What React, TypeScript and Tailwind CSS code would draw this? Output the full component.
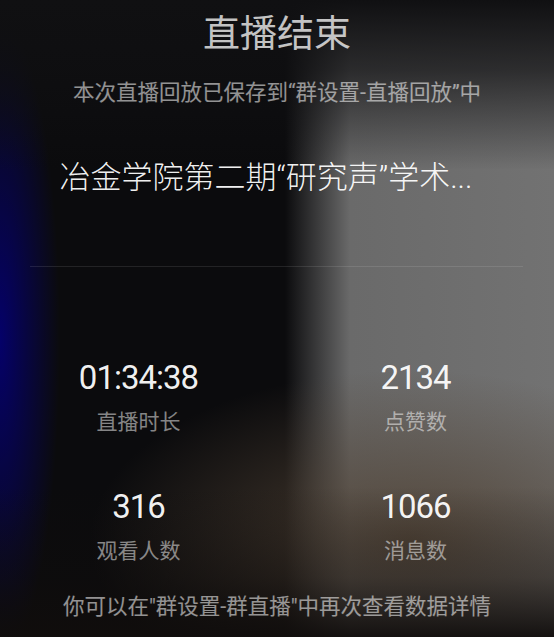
const stats = [
  { value: "01:34:38", label: "直播时长" },
  { value: "2134", label: "点赞数" },
  { value: "316", label: "观看人数" },
  { value: "1066", label: "消息数" },
];

export default function App() {
  return (
    <div
      className="flex h-[637px] w-full flex-col items-center overflow-hidden bg-[#0b0b0d] bg-[image:linear-gradient(to_bottom,rgba(16,16,18,1)_0px,rgba(16,16,18,0.7)_70px,rgba(16,16,18,0)_170px),linear-gradient(to_top,rgba(16,13,12,0.95)_0px,rgba(16,13,12,0.4)_60px,rgba(16,13,12,0)_150px),radial-gradient(ellipse_60px_320px_at_0px_340px,rgba(4,0,110,0.95),rgba(4,0,110,0)_100%),radial-gradient(ellipse_320px_170px_at_410px_540px,rgba(80,66,52,0.9),rgba(80,66,52,0)_100%),linear-gradient(to_right,rgba(108,108,108,0)_285px,#6a6a6a_350px,#727272_100%)] font-['Roboto','Noto_Sans_CJK_SC',sans-serif]"
    >
      <h1 className="mt-[16px] text-[37px] leading-[37px] font-normal text-white/75">
        直播结束
      </h1>
      <p className="mt-[29px] text-[21.5px] leading-[22px] text-white/55">
        本次直播回放已保存到“群设置-直播回放”中
      </p>
      <p className="mt-[58px] mr-[22px] text-[31px] leading-[31px] font-light text-white/95">
        冶金学院第二期“研究声”学术...
      </p>
      <div className="mt-[73px] ml-[30px] mr-[31px] h-px self-stretch bg-white/10" />

      <div className="mt-[94px] grid w-full grid-cols-2 gap-y-[57px] text-center">
        {stats.map((s) => (
          <div key={s.label} className="flex flex-col items-center">
            <span className="text-[33px] leading-[33px] tracking-[-1px] text-white/95">
              {s.value}
            </span>
            <span className="mt-[18px] text-[21px] leading-[21px] text-white/50">
              {s.label}
            </span>
          </div>
        ))}
      </div>

      <p className="mt-[34px] text-[21.5px] leading-[22px] text-white/55">
        你可以在"群设置-群直播"中再次查看数据详情
      </p>
    </div>
  );
}
